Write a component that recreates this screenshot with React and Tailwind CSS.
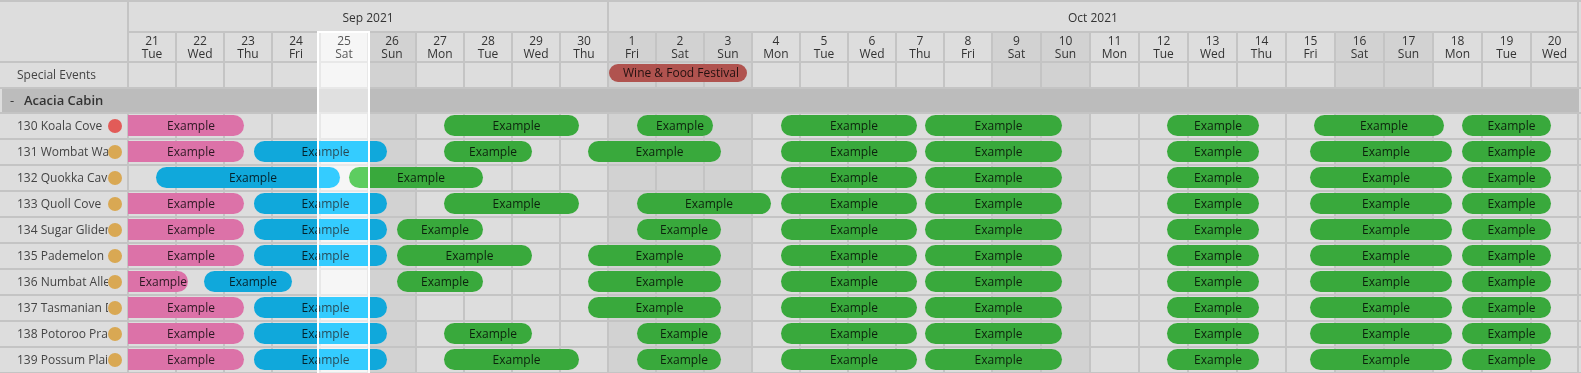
import React from "react";

const DAYS = [
  [21, "Tue", 0], [22, "Wed", 0], [23, "Thu", 0], [24, "Fri", 0], [25, "Sat", 1], [26, "Sun", 1],
  [27, "Mon", 0], [28, "Tue", 0], [29, "Wed", 0], [30, "Thu", 0],
  [1, "Fri", 1], [2, "Sat", 1], [3, "Sun", 1], [4, "Mon", 0], [5, "Tue", 0], [6, "Wed", 0],
  [7, "Thu", 0], [8, "Fri", 0], [9, "Sat", 1], [10, "Sun", 1], [11, "Mon", 0], [12, "Tue", 0],
  [13, "Wed", 0], [14, "Thu", 0], [15, "Fri", 0], [16, "Sat", 1], [17, "Sun", 1], [18, "Mon", 0],
  [19, "Tue", 0], [20, "Wed", 0],
];

const T0 = 127;
const PINK = "pink";
const BLUE = "blue";
const GREEN = "green";

const STD = [
  [GREEN, 781, 917],
  [GREEN, 925, 1062],
  [GREEN, 1167, 1259],
  [GREEN, 1310, 1452],
  [GREEN, 1462, 1551],
];

const ROWS = [
  { name: "130 Koala Cove", dot: "red", bars: [[PINK, 128, 244], [GREEN, 444, 579], [GREEN, 637, 713], [GREEN, 781, 917], [GREEN, 925, 1062], [GREEN, 1167, 1259], [GREEN, 1314, 1444], [GREEN, 1462, 1551]] },
  { name: "131 Wombat Waters", bars: [[PINK, 128, 244], [BLUE, 254, 387], [GREEN, 444, 532], [GREEN, 588, 721], ...STD] },
  { name: "132 Quokka Cave", bars: [[BLUE, 156, 340], [GREEN, 349, 483], ...STD] },
  { name: "133 Quoll Cove", bars: [[PINK, 128, 244], [BLUE, 254, 387], [GREEN, 444, 579], [GREEN, 637, 771], ...STD] },
  { name: "134 Sugar Glider", bars: [[PINK, 128, 244], [BLUE, 254, 387], [GREEN, 397, 483], [GREEN, 637, 721], ...STD] },
  { name: "135 Pademelon", bars: [[PINK, 128, 244], [BLUE, 254, 387], [GREEN, 397, 532], [GREEN, 588, 721], ...STD] },
  { name: "136 Numbat Alley", bars: [[PINK, 128, 188], [BLUE, 204, 292], [GREEN, 397, 483], [GREEN, 588, 721], ...STD] },
  { name: "137 Tasmanian Devil", bars: [[PINK, 128, 244], [BLUE, 254, 387], [GREEN, 588, 721], ...STD] },
  { name: "138 Potoroo Prairie", bars: [[PINK, 128, 244], [BLUE, 254, 387], [GREEN, 444, 532], [GREEN, 637, 721], ...STD] },
  { name: "139 Possum Plains", bars: [[PINK, 128, 244], [BLUE, 254, 387], [GREEN, 444, 579], [GREEN, 637, 721], ...STD] },
];

function cellClass(i, shaded) {
  const w = i < 18 ? "w-[48px]" : "w-[49px]";
  const bg = shaded ? "bg-[#d2d2d2]" : "bg-[#dddddd]";
  const last = i === 29 ? "border-r-2" : "";
  return `${w} ${bg} ${last} shrink-0 h-full border-l-2 border-[#c4c4c4]`;
}

function Cells() {
  return DAYS.map((d, i) => <div key={i} className={cellClass(i, d[2])} />);
}

function Bar({ kind, x1, x2 }) {
  const color =
    kind === PINK
      ? "bg-[#dc72a8] rounded-r-full"
      : kind === BLUE
      ? "bg-[#10a8db] rounded-full"
      : "bg-[#39a93c] rounded-full";
  return (
    <div
      className={`absolute top-[1px] h-[21px] ${color} flex items-center justify-center pl-[10px] overflow-hidden whitespace-nowrap text-[12px] text-black/80`}
      style={{ left: x1 - T0, width: x2 - x1 }}
    >
      Example
    </div>
  );
}

export default function App() {
  return (
    <div className="relative w-[1581px] h-[373px] overflow-hidden bg-[#dddddd] font-['Open_Sans',sans-serif] text-[12px] text-[#333]">
      <div className="border-t-2 border-[#c4c4c4]">
        {/* header */}
        <div className="flex">
          <div className="w-[127px] h-[61px] border-b-2 border-[#c4c4c4] shrink-0" />
          <div className="flex flex-col">
            <div className="flex h-[31px] border-b-2 border-[#c4c4c4]">
              <div className="w-[480px] h-full border-l-2 border-[#c4c4c4] flex items-center justify-center pt-[3px]">
                Sep 2021
              </div>
              <div className="w-[972px] h-full border-x-2 border-[#c4c4c4] flex items-center justify-center pt-[3px]">
                Oct 2021
              </div>
            </div>
            <div className="flex h-[30px] border-b-2 border-[#c4c4c4]">
              {DAYS.map((d, i) => (
                <div key={i} className={`${cellClass(i, d[2])} flex flex-col items-center justify-center leading-[13px]`}>
                  <span>{d[0]}</span>
                  <span>{d[1]}</span>
                </div>
              ))}
            </div>
          </div>
        </div>

        {/* special events */}
        <div className="flex h-[26px] border-b-2 border-[#c4c4c4]">
          <div className="w-[127px] shrink-0 flex items-center pl-[17px] text-[#444]">Special Events</div>
          <div className="relative flex">
            <Cells />
            <div
              className="absolute top-[1px] h-[18px] rounded-full bg-[#b0534f] flex items-center justify-center pl-[6px] whitespace-nowrap text-[12px] text-black/80"
              style={{ left: 609 - T0, width: 747 - 609 }}
            >
              Wine &amp; Food Festival
            </div>
          </div>
        </div>

        {/* group */}
        <div className="h-[25px] border-b-2 border-[#c4c4c4]">
          <div className="ml-[2px] w-[1577px] h-full bg-[#bcbcbc] flex items-center text-[13px] font-semibold text-[#333]">
            <span className="pl-[8px] w-[22px] font-normal">-</span>
            <span>Acacia Cabin</span>
          </div>
        </div>

        {/* rows */}
        {ROWS.map((r, ri) => (
          <div key={ri} className="flex h-[26px] border-b-2 border-[#c4c4c4]">
            <div className="w-[127px] shrink-0 flex items-center pl-[17px]">
              <span className="w-[91px] overflow-hidden whitespace-nowrap text-[#444]">{r.name}</span>
              <span
                className={`w-[14px] h-[14px] rounded-full shrink-0 ${r.dot === "red" ? "bg-[#e25b58]" : "bg-[#d9a853]"}`}
              />
            </div>
            <div className="relative flex">
              <Cells />
              {r.bars.map((b, bi) => (
                <Bar key={bi} kind={b[0]} x1={b[1]} x2={b[2]} />
              ))}
            </div>
          </div>
        ))}
      </div>

      {/* today highlight */}
      <div className="absolute top-[31px] left-[317px] w-[53px] bottom-0 border-2 border-b-0 border-white bg-[#242424] mix-blend-plus-lighter z-10 pointer-events-none" />
    </div>
  );
}
